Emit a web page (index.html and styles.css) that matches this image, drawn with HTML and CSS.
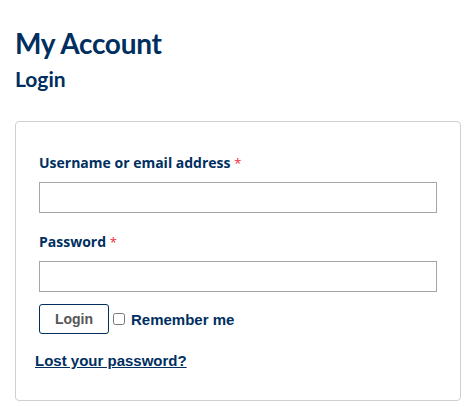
FILE: index.html
```html
<!DOCTYPE html>
<html lang="en">
<head>
    <meta charset="UTF-8">
    <meta name="viewport" content="width=device-width, initial-scale=1.0">
    <title>My Account</title>
    <link rel="stylesheet" href="styles.css">
</head>
<body>
    <h1>My Account</h1>
    <h2>Login</h2>
    <form class="login-box">
        <div class="field">
            <label for="username">Username or email address <span class="required">*</span></label>
            <input type="text" id="username">
        </div>
        <div class="field">
            <label for="password">Password <span class="required">*</span></label>
            <input type="password" id="password">
        </div>
        <div class="actions">
            <button type="button" class="button">Login</button>
            <label class="remember"><input type="checkbox"> Remember me</label>
        </div>
        <a href="#" class="lost">Lost your password?</a>
    </form>
</body>
</html>
```

FILE: styles.css
```css
body {
    margin: 0;
    padding: 28px 11px 6px 15px;
    background-color: #fff;
    color: #002f5f;
    font-family: 'Liberation Sans', Arial, sans-serif;
}
h1 {
    font-family: 'Lato', sans-serif;
    font-size: 28px;
    font-weight: 700;
    letter-spacing: -0.3px;
    line-height: 30px;
    margin: 0 0 8px 0;
}
h2 {
    font-family: 'Lato', sans-serif;
    font-size: 21px;
    font-weight: 700;
    line-height: 26px;
    margin: 0 0 29px 0;
}
.login-box {
    border: 1px solid #d0d0d0;
    border-radius: 4px;
    padding: 33px 23px 30px 23px;
}
.field label {
    display: block;
    font-family: 'Open Sans', sans-serif;
    font-size: 14px;
    font-weight: 700;
    line-height: 16px;
    margin-bottom: 11px;
}
.required {
    color: #ef2b3a;
    font-weight: 400;
    font-size: 13px;
}
.field input {
    display: block;
    box-sizing: border-box;
    width: 100%;
    height: 31px;
    border: 1px solid #a6a6a6;
    margin: 0 0 21px 0;
}
.actions {
    display: flex;
    align-items: center;
    margin-top: -9px;
}
.button {
    width: 70px;
    height: 30px;
    background-color: #fff;
    border: 1px solid #002f5f;
    border-radius: 3px;
    color: #555;
    font-family: 'Liberation Sans', Arial, sans-serif;
    font-size: 14px;
    font-weight: 700;
    cursor: pointer;
}
.remember {
    display: flex;
    align-items: center;
    font-size: 15px;
    font-weight: 700;
}
.remember input {
    margin: 0 6px 0 4px;
    width: 12px;
    height: 12px;
}
.lost {
    display: inline-block;
    margin: 18px 0 0 -4px;
    color: #002f5f;
    font-size: 15px;
    font-weight: 700;
}
```
